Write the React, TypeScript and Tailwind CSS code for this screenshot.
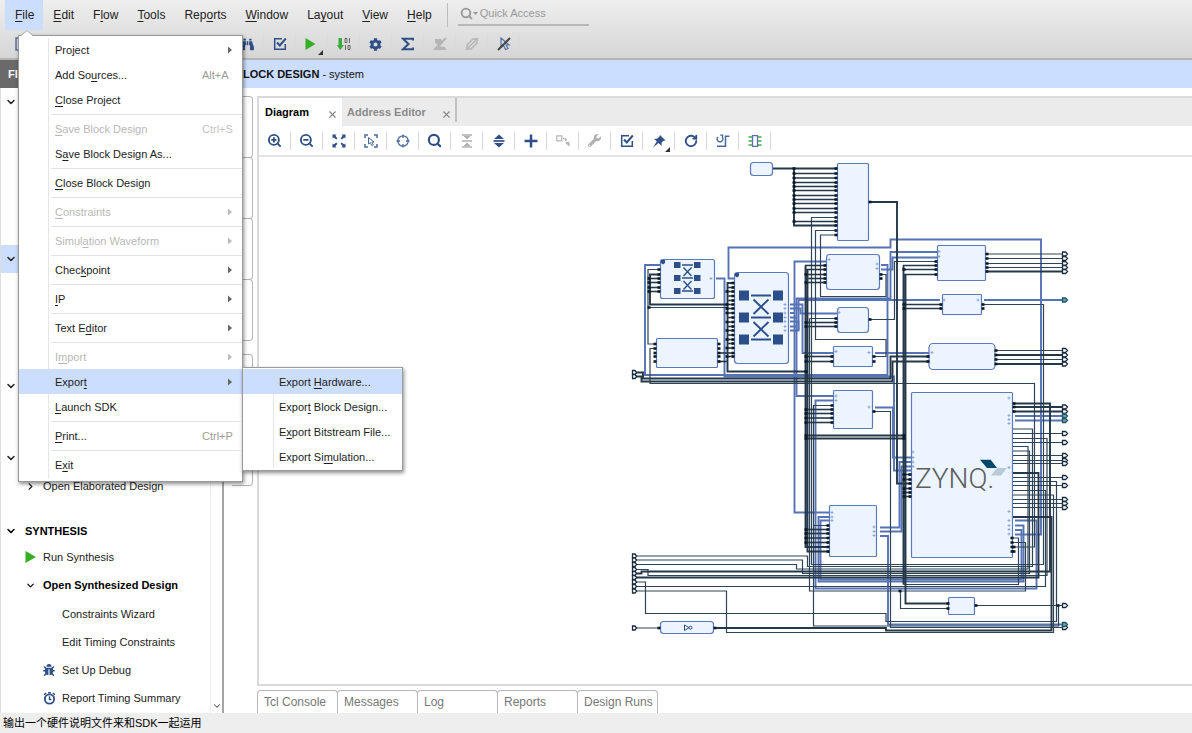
import { ReactNode } from "react";
import { ChevronDown, ChevronRight, RotateCw, Search, X, ZoomIn, ZoomOut } from "lucide-react";
import { FaBinoculars, FaBug, FaCog, FaWrench } from "react-icons/fa";

interface MenuEntry {
  label: string;
  // index of the underlined mnemonic letter
  key: number;
  shortcut?: string;
  submenu?: boolean;
  disabled?: boolean;
  separator?: boolean;
  active?: boolean;
}

const menuBar = ["File", "Edit", "Flow", "Tools", "Reports", "Window", "Layout", "View", "Help"];
const menuBarKeys = [0, 0, 1, 0, 3, 0, 2, 0, 0];

const fileMenu: MenuEntry[] = [
  { label: "Project", key: 3, submenu: true },
  { label: "Add Sources...", key: 6, shortcut: "Alt+A" },
  { label: "Close Project", key: 0, separator: true },
  { label: "Save Block Design", key: 0, shortcut: "Ctrl+S", disabled: true },
  { label: "Save Block Design As...", key: 1, separator: true },
  { label: "Close Block Design", key: 0, separator: true },
  { label: "Constraints", key: 0, submenu: true, disabled: true, separator: true },
  { label: "Simulation Waveform", key: 5, submenu: true, disabled: true, separator: true },
  { label: "Checkpoint", key: 4, submenu: true, separator: true },
  { label: "IP", key: 0, submenu: true, separator: true },
  { label: "Text Editor", key: 6, submenu: true, separator: true },
  { label: "Import", key: 1, submenu: true, disabled: true },
  { label: "Export", key: 5, submenu: true, active: true },
  { label: "Launch SDK", key: 0, separator: true },
  { label: "Print...", key: 0, shortcut: "Ctrl+P", separator: true },
  { label: "Exit", key: 1 },
];

const exportMenu: MenuEntry[] = [
  { label: "Export Hardware...", key: 7, active: true },
  { label: "Export Block Design...", key: 5 },
  { label: "Export Bitstream File...", key: 1 },
  { label: "Export Simulation...", key: 9 },
];

const Mnemonic = ({ text, at }: { text: string; at: number }) => (
  <span className="whitespace-pre">
    {text.slice(0, at)}
    <u className="underline underline-offset-2">{text[at]}</u>
    {text.slice(at + 1)}
  </span>
);

const Glyph = ({ children, size = 14 }: { children: ReactNode; size?: number }) => (
  <svg width={size} height={size} viewBox="0 0 14 14" fill="none" stroke="currentColor" strokeWidth="1.5">
    {children}
  </svg>
);

const CheckGlyph = () => (
  <Glyph>
    <path d="M9 1.7H1.7V12.3H12.3V7" />
    <path d="M4 5.5L6.8 8.5L12.8 1.5" strokeWidth="2" />
  </Glyph>
);

const CornerMark = () => (
  <svg className="absolute right-1 -bottom-0.5 text-[#333]" width="5" height="5" viewBox="0 0 5 5">
    <path d="M5 0V5H0Z" fill="currentColor" />
  </svg>
);

/* ---------- main toolbar ---------- */

const mainTools: { name: string; tone: string; icon: ReactNode; more?: boolean }[] = [
  { name: "Find", tone: "text-[#2f4f87]", icon: <FaBinoculars size={13} /> },
  { name: "Validate", tone: "text-[#2f4f87]", icon: <CheckGlyph /> },
  {
    name: "Run",
    tone: "text-[#35b024]",
    more: true,
    icon: (
      <Glyph>
        <path d="M0.5 1L10.5 7L0.5 13Z" fill="currentColor" stroke="none" />
      </Glyph>
    ),
  },
  {
    name: "Program device",
    tone: "text-[#3cab3c]",
    icon: (
      <Glyph>
        <path d="M1.5 1H5V8H7L3.3 13L-0.4 8H1.5Z" fill="currentColor" stroke="none" />
        <path d="M8 1.5H10V5.5H8ZM12.5 1V6M8.5 8V13M11 8.5H13V12.5H11Z" stroke="#666" strokeWidth="1" />
      </Glyph>
    ),
  },
  { name: "Settings", tone: "text-[#2f4f87]", icon: <FaCog size={13} /> },
  {
    name: "Statistics",
    tone: "text-[#2f4f87]",
    icon: (
      <Glyph>
        <path d="M12 3.5V1.8H2L7.5 7L2 12.2H12V10.5" strokeWidth="2" />
      </Glyph>
    ),
  },
  {
    name: "Unmark",
    tone: "text-[#b5b5b5]",
    icon: (
      <Glyph>
        <path d="M2 2H8L10 5L7 9L2 6ZM1 12L5 9L12 10L13 13H1Z" fill="currentColor" stroke="none" />
        <path d="M1 13L13 1" strokeWidth="2" />
      </Glyph>
    ),
  },
  {
    name: "Unlink",
    tone: "text-[#b5b5b5]",
    icon: (
      <Glyph>
        <path d="M2 8L8 2H12V6L6 12H2Z" />
        <path d="M1 13L13 1M5 9L9 5" />
      </Glyph>
    ),
  },
  {
    name: "Clear selection",
    tone: "text-[#5573a8]",
    icon: (
      <Glyph>
        <path d="M4 1V10L6.5 8.5L8.5 12.5L11 11.5L9 8H12Z" strokeWidth="1.2" />
        <path d="M1 13L13 1" stroke="#444" strokeWidth="2" />
      </Glyph>
    ),
  },
];

/* ---------- diagram toolbar ---------- */

const diagramTools: { name: string; tone: string; icon: ReactNode; more?: boolean }[] = [
  { name: "Zoom in", tone: "text-[#2f4f87]", icon: <ZoomIn size={15} strokeWidth={3} /> },
  { name: "Zoom out", tone: "text-[#2f4f87]", icon: <ZoomOut size={15} strokeWidth={3} /> },
  {
    name: "Zoom fit",
    tone: "text-[#2f4f87]",
    icon: (
      <Glyph>
        <path
          d="M0.5 0.5H4.5L3.4 1.8L5.4 4.2L4.2 5.4L1.8 3.4L0.5 4.5ZM13.5 0.5V4.5L12.2 3.4L9.8 5.4L8.6 4.2L10.6 1.8L9.5 0.5ZM0.5 13.5V9.5L1.8 10.6L4.2 8.6L5.4 9.8L3.4 12.2L4.5 13.5ZM13.5 13.5H9.5L10.6 12.2L8.6 9.8L9.8 8.6L12.2 10.6L13.5 9.5Z"
          fill="currentColor"
          stroke="none"
        />
      </Glyph>
    ),
  },
  {
    name: "Select area",
    tone: "text-[#4a68a0]",
    icon: (
      <Glyph>
        <path d="M1 4V1H4M10 1H13V4M13 10V13H10M4 13H1V10" />
        <path d="M4.5 3.5V10L6.3 8.6L7.8 11.5L9.3 10.8L7.9 8H10Z" strokeWidth="1" />
      </Glyph>
    ),
  },
  {
    name: "Center",
    tone: "text-[#4a68a0]",
    icon: (
      <Glyph>
        <circle cx="7" cy="7" r="5.2" strokeWidth="1.3" />
        <path d="M7 0.5V4M7 10V13.5M0.5 7H4M10 7H13.5" strokeWidth="1.3" />
      </Glyph>
    ),
  },
  { name: "Search", tone: "text-[#2f4f87]", icon: <Search size={15} strokeWidth={3.5} /> },
  {
    name: "Collapse",
    tone: "text-[#b0b0b0]",
    icon: (
      <Glyph>
        <path d="M2 1H12M2 7H12M2 13H12" strokeWidth="1.3" />
        <path d="M3.5 2L7 5.6L10.5 2ZM3.5 12L7 8.4L10.5 12Z" fill="currentColor" stroke="none" />
      </Glyph>
    ),
  },
  {
    name: "Expand",
    tone: "text-[#2f4f87]",
    icon: (
      <Glyph>
        <path d="M2 5L7 0.5L12 5ZM2 9L7 13.5L12 9Z" fill="currentColor" stroke="none" />
        <path d="M1.5 7H12.5" strokeWidth="1.7" />
      </Glyph>
    ),
  },
  {
    name: "Add IP",
    tone: "text-[#2f4f87]",
    icon: (
      <Glyph>
        <path d="M7 0.5V13.5M0.5 7H13.5" strokeWidth="2.5" />
      </Glyph>
    ),
  },
  {
    name: "Connect",
    tone: "text-[#b5b5b5]",
    icon: (
      <Glyph>
        <path d="M0.8 1.8H5.8V6.8H0.8Z" strokeWidth="1.2" />
        <path d="M7 4.5H8.5M10 8L13 11" strokeWidth="1.6" />
        <path d="M8.5 3.5L11.5 5.5L9 7.5ZM13.5 7.5V12.5L9.5 9Z" fill="currentColor" stroke="none" />
      </Glyph>
    ),
  },
  { name: "Customize", tone: "text-[#b0b0b0]", icon: <FaWrench size={13} /> },
  { name: "Validate design", tone: "text-[#2f4f87]", icon: <CheckGlyph /> },
  {
    name: "Pin",
    tone: "text-[#2f4f87]",
    more: true,
    icon: (
      <Glyph>
        <path d="M8 1L13.5 6.5L11 7L9.5 9L9.8 12L6.5 9L1 13.5L4.8 7.5L2 4.8H5L7.2 3Z" fill="currentColor" stroke="none" />
      </Glyph>
    ),
  },
  { name: "Regenerate layout", tone: "text-[#2f4f87]", icon: <RotateCw size={14} strokeWidth={3.2} /> },
  {
    name: "Optimize routing",
    tone: "text-[#4a68a0]",
    icon: (
      <Glyph>
        <path d="M2 3A2.8 2.8 0 1 0 6 3M4.2 1.2H6.6V4" strokeWidth="1.3" />
        <path d="M1 12.2H9.5V2.2H13.5M9.5 8.5V12" strokeWidth="1.5" />
      </Glyph>
    ),
  },
  {
    name: "Interface view",
    tone: "text-[#3fae49]",
    icon: (
      <Glyph>
        <path d="M0.5 3H4M0.5 7H4M0.5 11H4M10 3H13.5M10 7H13.5M10 11H13.5" strokeWidth="1.6" />
        <path d="M4.5 1.7H9.5V12.3H4.5Z" stroke="#5573a8" strokeWidth="1.3" fill="#fff" />
      </Glyph>
    ),
  },
];

/* ---------- block diagram ---------- */

// x, y, width, height, corner radius
const blocks = [
  [750.5, 162.5, 22, 13, 3],
  [837.5, 163.5, 31, 77, 1],
  [660.5, 259.5, 54, 39, 2],
  [734.5, 272.5, 54, 91, 3],
  [656.5, 338.5, 61, 29, 1],
  [826.5, 254.5, 53, 35, 3],
  [837.5, 307.5, 31, 25, 3],
  [833.5, 346.5, 39, 20, 1],
  [937.5, 245.5, 48, 35, 1],
  [942.5, 294.5, 39, 20, 1],
  [929, 343.5, 66, 26, 4],
  [833.5, 390.5, 39, 38, 1],
  [829.5, 505.5, 47, 51, 1],
  [911.5, 392.5, 101, 165, 1],
  [948.5, 597.5, 26, 17, 1],
  [660.5, 621.5, 53, 12, 3],
];

const busWires = [
  "M734 278.5H728.5V247.5H890.5V239.5H1041V534.5H1015",
  "M660 265H645V375H887.5V265H881",
  "M716 278.5H724.5V376.5H894V470.5H911",
  "M826 261.5H794.5V512.5H829",
  "M790 304.5H802.5V353H833",
  "M790 308.5H800.5V313.5H837",
  "M790 313H794.5M790 317.5H796.5M790 321.5H798.5V330.5H790M790 326.5H796.5",
  "M798.5 330V300H940",
  "M833 396H796.5V298.5H890.5V252H937",
  "M937 257.5H892.5V269.5H881",
  "M984 300H1063M875 353H929",
  "M833 400.5H815.5V588.5H1036.5V520.5H1015",
  "M829 517H818.5V581.5H1023.5V525.5H1015",
  "M829 520.5H820.5V579.5H1021.5V530H1015",
  "M875 407.5H893V457.5H911",
  "M880 527.5H899.5V462H911",
  "M880 531.5H901.5V466.5H911",
  "M880 536H888V624.5H1063",
  "M1015 416H1063M1015 420.5H1063",
];

const thinWires = [
  "M837 217.5H811.5V564.5H1043.5V304.5H982",
  "M837 230.5H815.5V339.5H886V356.5H873",
  "M837 235H820.5V296.5H886V274.5H880",
  "M869 319.5H894.5V261.5H937",
  "M809.5 318.5V591H1025.5V542.5H1013",
  "M833 405.5H813.5V626H1058.5V605.5",
  "M829 525.5H813.5M837 318.5H809.5",
  "M656 348.5H650V383.5H1034.5V547H1014",
  "M660 269.5H648V344H656M648 307.5H728",
  "M636 556H807.5V566.5H1032.5V429H1013",
  "M636 560H802.5V573.5H1029.5V451H1013",
  "M636 564.5H796.5V569H1028V446.5H1013",
  "M636 569.5H648V575.5H1047V438.5H1013",
  "M636 582H645.5V613.5H886V621.5H1056.5V481.5H1013",
  "M636 586.5H1045.5V490.5H1013",
  "M636 591H726.5V632.5H1053.5V495H1013",
  "M636 628H660M715 628H886",
  "M873 411.5H890.5V627.5H1063",
  "M900.5 591V608.5H949M975 605.5H1063",
  "M903.5 584.5H1018.5V538H1013",
  "M986 254H1063M986 258.5H1063M986 263.5H1063M986 267.5H1063",
  "M996 350.5H1063M996 359.5H1063",
  "M1013 433.5H1063M1013 442.5H1063M1013 455.5H1063M1013 460.5H1063M1013 463.5H1063M1013 477.5H1063",
  "M1013 485.5H1063M1013 499.5H1063M1013 503.5H1063M1013 507.5H1063",
];

const thickWires = [
  "M773 168.5H837M794 168.5V225.5H837",
  "M869 202H897V483.5H911",
  "M660 274.5H650V304.5H728",
  "M734 283H727.5V371.5H807",
  "M805.5 265.5V547H829M807.5 269.5V551.5H829",
  "M903.5 265.5V584.5M905.5 274.5V603.5H949",
  "M636 372.5H643V378.5H890.5V356.5H929",
  "M636 376.5H641.5V381.5H892.5V361.5H929",
  "M636 573.5H641.5V571.5H1050V403.5H1013",
  "M636 577.5H1038.5V473H1013",
  "M715 628H886V630.5H1051.5V517H1013",
  "M805.5 435.5H903.5M807.5 438.5H905.5",
  "M986 271.5H1063M996 355H1063M996 364H1063M1013 407H1063M1013 411.5H1063",
];

// groups of parallel stubs: from x, to x, list of y
const stubs: [number, number, number[]][] = [
  [794, 837, [173.5, 178, 182.5, 186.5, 190.5, 195.5, 199.5, 203.5, 208.5, 212.5, 221.5]],
  [805, 826, [265.5, 269.5, 274.5, 278.5, 282.5]],
  [807, 837, [322.5, 326.5]],
  [805, 833, [356.5, 361.5, 409.5, 413.5, 418, 422.5]],
  [805, 829, [529.5, 533.5, 538, 542.5]],
  [903, 911, [474.5, 479.5, 488.5, 492.5, 496.5]],
  [903, 937, [265.5, 269.5, 274.5]],
  [903, 942, [304.5, 308.5]],
  [649, 660, [278.5, 282.5, 287.5, 291.5]],
  [717, 728, [353, 361.5]],
  [727, 734, [287.5, 291.5, 296, 300.5, 304.5, 308.5, 313, 317.5, 322, 326.5, 330.5, 335, 339.5, 343.5, 348, 353, 356.5]],
];

// small square terminals: x, list of y
const pins: [number, number[]][] = [
  [794, [168.5, 173.5, 178, 182.5, 186.5, 190.5, 195.5, 199.5, 203.5, 208.5, 212.5, 221.5]],
  [836, [168.5, 173.5, 178, 182.5, 186.5, 190.5, 195.5, 199.5, 203.5, 208.5, 212.5, 217.5, 221.5, 225.5, 230.5, 235]],
  [825, [265.5, 269.5, 274.5, 278.5, 282.5]],
  [806, [274.5, 282.5, 322.5, 326.5, 356.5, 361.5, 371.5, 409.5, 413.5, 418, 422.5, 435.5, 438.5, 529.5, 533.5, 538, 542.5]],
  [836, [318.5, 322.5, 326.5]],
  [832, [356.5, 361.5, 405.5, 409.5, 413.5, 418, 422.5]],
  [828, [525.5, 529.5, 533.5, 538, 542.5, 547, 551.5]],
  [904, [269.5, 304.5, 308.5, 435.5, 438.5, 474.5, 479.5, 488.5, 492.5, 496.5]],
  [910, [474.5, 479.5, 483.5, 488.5, 492.5, 496.5]],
  [936, [261.5, 265.5, 269.5, 274.5]],
  [941, [304.5, 308.5]],
  [928, [356.5, 361.5]],
  [987, [254, 258.5, 263.5, 267.5, 271.5]],
  [983, [304.5, 308.5]],
  [996, [350.5, 355, 359.5, 364]],
  [870, [202, 319.5]],
  [874, [356.5, 361.5, 411.5]],
  [881, [274.5, 278.5]],
  [655, [344, 348.5, 353, 356.5, 361.5]],
  [719, [344, 348.5, 353, 356.5, 361.5]],
  [649, [278.5, 282.5, 287.5, 291.5, 307.5]],
  [659, [269.5, 274.5, 278.5, 282.5, 287.5, 291.5, 628]],
  [727, [291.5, 304.5, 308.5, 313, 322, 330.5, 339.5, 348, 356.5]],
  [733, [283, 287.5, 291.5, 296, 300.5, 304.5, 308.5, 313, 317.5, 322, 326.5, 330.5, 335, 339.5, 343.5, 348, 353, 356.5]],
  [1012, [538, 542.5, 547, 551.5]],
  [1014, [403.5, 407, 411.5, 547, 551.5]],
  [948, [603.5, 608.5]],
  [976, [605.5]],
  [1058, [605.5]],
  [900, [591]],
  [715, [628]],
];

const outPorts = [
  254, 258.5, 263.5, 267.5, 271.5, 350.5, 355, 359.5, 364, 407, 411.5, 433.5, 442.5, 455.5, 460.5, 463.5, 477.5, 485.5,
  499.5, 503.5, 507.5, 605.5, 627.5,
];
const busPorts = [300, 416, 420.5, 624.5];
const inPorts = [372.5, 376.5, 556, 560, 564.5, 569.5, 573.5, 577.5, 582, 586.5, 591, 628];

// tiny "+" marks of the interface pins
const busMarks = [
  [829, 259.5], [839, 312.5], [836, 351.5], [836, 396], [836, 400.5], [832, 512.5], [832, 517], [832, 520.5],
  [711, 278.5], [785, 304.5], [785, 308.5], [785, 313], [785, 317.5], [785, 321.5], [785, 326.5], [785, 330.5],
  [877, 264], [877, 268.5], [869, 352.5], [939, 251.5], [939, 256.5], [944, 300], [978, 300], [932, 352.5],
  [869, 407], [874, 527], [874, 531.5], [874, 535.5], [1009, 398], [1009, 415.5], [1009, 419.5], [1009, 423.5],
  [1009, 467.5], [1009, 511.5], [1009, 520.5], [1009, 525.5], [1009, 529.5], [1009, 534], [913, 452], [913, 457.5],
  [913, 462], [913, 466.5],
];

const BlockDiagram = () => (
  <svg width="440" height="476" viewBox="630 160 440 476" fill="none" role="img" aria-label="system block design">
    <g stroke="#5673b5" strokeWidth="1.9">
      {busWires.map((d) => (
        <path key={d} d={d} />
      ))}
    </g>
    <g stroke="#2f4456" strokeWidth="1.2">
      {thinWires.map((d) => (
        <path key={d} d={d} />
      ))}
    </g>
    <g stroke="#243849" strokeWidth="1.9">
      {thickWires.map((d) => (
        <path key={d} d={d} />
      ))}
    </g>
    <g stroke="#243849" strokeWidth="1.6">
      {stubs.map(([x1, x2, ys]) => ys.map((y) => <path key={`${x1}-${y}`} d={`M${x1} ${y}H${x2}`} />))}
    </g>
    <g fill="#ebf4ff" stroke="#5b7abc" strokeWidth="1.2">
      {blocks.map(([x, y, w, h, r]) => (
        <rect key={`${x}-${y}`} x={x} y={y} width={w} height={h} rx={r} />
      ))}
    </g>
    <g fill="#0c1826">
      {pins.map(([x, ys], i) => ys.map((y) => <rect key={`${i}-${y}`} x={x - 1.5} y={y - 1.3} width="3" height="2.6" />))}
    </g>
    <g stroke="#7f9bd0" strokeWidth="0.8">
      {busMarks.map(([x, y]) => (
        <path key={`${x}-${y}`} d={`M${x - 1.5} ${y}h3m-1.5 -1.5v3`} />
      ))}
    </g>
    <g stroke="#1b2e40" strokeWidth="1.3" fill="#fff">
      {outPorts.map((y) => (
        <path key={y} d={`M1062.5 ${y - 2}H1065.5L1067.5 ${y}L1065.5 ${y + 2}H1062.5Z`} />
      ))}
      {inPorts.map((y) => (
        <path key={y} d={`M632.5 ${y - 2}H635L636.5 ${y}L635 ${y + 2}H632.5Z`} />
      ))}
    </g>
    <g stroke="#1f5566" strokeWidth="1.3" fill="#6fa3ac">
      {busPorts.map((y) => (
        <path key={y} d={`M1062.5 ${y - 2}H1065.5L1067.5 ${y}L1065.5 ${y + 2}H1062.5Z`} />
      ))}
    </g>

    {/* interconnect symbols */}
    <g fill="#2c4f8c">
      {[265, 278, 291].map((y) => (
        <path key={y} d={`M674 ${y - 3}h6.5v6h-6.5zM694 ${y - 3}h6.5v6h-6.5z`} />
      ))}
      {[295.5, 317.5, 339.5].map((y) => (
        <path key={y} d={`M739 ${y - 5}h10v10h-10zM773 ${y - 5}h10v10h-10z`} />
      ))}
      <path d="M661 263V260H665V263L663 264.5ZM735 276V273H739V276L737 277.5Z" />
    </g>
    <g stroke="#2c4f8c" strokeWidth="1.4">
      <path d="M682 265H693M682 278H693M682 291H693M683.5 267.5L691.5 276M691.5 267.5L683.5 276M683.5 281L691.5 289.5M691.5 281L683.5 289.5" />
      <path
        d="M751 295.5H771M751 317.5H771M751 339.5H771M753.5 299.5L768.5 314M768.5 299.5L753.5 314M753.5 322L768.5 336.5M768.5 322L753.5 336.5"
        strokeWidth="1.9"
      />
    </g>
    <g stroke="#2c4f8c">
      <path d="M684.5 625V630.5L689 627.7Z" />
      <circle cx="690.5" cy="627.7" r="1.5" />
    </g>

    <text x="915" y="487.5" fill="#5e5e5e" className="font-['Roboto'] text-[28px] font-light">
      ZYNQ.
    </text>
    <path d="M980 459.7H990.7L997 468H987Z" fill="#00486b" />
    <path d="M997 468H1007L1001 475.5H991Z" fill="#b9c9d6" />
  </svg>
);

/* ---------- menus ---------- */

const MenuRow = ({ entry, children }: { entry: MenuEntry; children?: ReactNode }) => (
  <li className="relative">
    <button
      disabled={entry.disabled}
      className={`relative flex h-[25px] w-full items-center pr-2 pl-9 text-left ${
        entry.active ? "bg-[#ccdeff]" : ""
      } ${entry.disabled ? "text-[#b8b8b8]" : "text-[#1c1c1c]"}`}
    >
      <span className="grow">
        <Mnemonic text={entry.label} at={entry.key} />
      </span>
      {entry.shortcut && (
        <span className={`w-8 whitespace-nowrap ${entry.disabled ? "text-[#c4c4c4]" : "text-[#9c9c94]"}`}>
          {entry.shortcut}
        </span>
      )}
      {entry.submenu && (
        <svg width="7" height="8" viewBox="0 0 7 8" className={entry.disabled ? "text-[#bbb]" : "text-[#666]"}>
          <path d="M1 0.5L5 4L1 7.5Z" fill="currentColor" />
        </svg>
      )}
    </button>
    {entry.separator && <div className="mb-px ml-8 h-[3px] border-b border-[#e3e3e3]" />}
    {children}
  </li>
);

const FileMenu = () => (
  <div className="absolute top-[35px] left-[18px] z-10 w-[225px] border border-[#9a9a9a] bg-white text-[11px] shadow-[1px_2px_4px_rgba(0,0,0,0.45)]">
    <svg className="absolute -top-1.5 left-0.5" width="12" height="7" viewBox="0 0 12 7">
      <path d="M0 6L6 0.5L12 6V7H0Z" fill="#fff" />
      <path d="M0 5.5L6 0.5L12 5.5" fill="none" stroke="#aaa" />
    </svg>
    <div className="absolute inset-y-0.5 left-[29px] w-px bg-[#e6e6e6]" />
    <ul className="pt-px pb-1">
      {fileMenu.map((entry) => (
        <MenuRow key={entry.label} entry={entry}>
          {entry.active && (
            <div className="absolute -top-0.5 left-[223px] w-[161px] border border-[#9a9a9a] bg-white shadow-[1px_2px_4px_rgba(0,0,0,0.45)]">
              <div className="absolute inset-y-0.5 left-[30px] w-px bg-[#e6e6e6]" />
              <ul className="py-px">
                {exportMenu.map((item) => (
                  <MenuRow key={item.label} entry={item} />
                ))}
              </ul>
            </div>
          )}
        </MenuRow>
      ))}
    </ul>
  </div>
);

const Header = () => (
  <header className="relative h-[60px] border-b-2 border-[#b4b4b4] bg-linear-to-b from-[#eeeeee] to-[#d6d6d6]">
    <div className="flex h-[30px] items-center pl-[5px]">
      <nav className="flex h-full">
        {menuBar.map((item, i) => (
          <button key={item} className={`h-full pr-[9px] pl-2.5 text-[#222] ${i === 0 ? "bg-[#ccdeff]" : ""}`}>
            <Mnemonic text={item} at={menuBarKeys[i]} />
          </button>
        ))}
      </nav>
      <div className="ml-1.5 h-6 w-px bg-[#bcbcbc]" />
      <label className="mt-0.5 ml-2.5 flex h-6 w-[131px] items-center self-start border-b-2 border-[#b8b8b8] pl-0.5 text-[11px] text-[#999]">
        <Search size={13} strokeWidth={3.5} />
        <svg width="5" height="3" viewBox="0 0 5 3">
          <path d="M0 0H5L2.5 3Z" fill="currentColor" />
        </svg>
        <input
          aria-label="Quick Access"
          placeholder="Quick Access"
          className="ml-0.5 w-24 bg-transparent outline-none placeholder:text-[#999]"
        />
      </label>
    </div>
    <div className="flex h-7 items-center pl-1.5">
      <button aria-label="Open" className="flex w-[226px] pl-2 text-[#5573a8]">
        <Glyph>
          <path d="M2 1H12V13H2Z" />
        </Glyph>
      </button>
      {mainTools.map((tool) => (
        <button
          key={tool.name}
          aria-label={tool.name}
          className={`relative flex h-[18px] w-8 items-center justify-center border-r border-[#dadada] ${tool.tone}`}
        >
          {tool.icon}
          {tool.more && <CornerMark />}
        </button>
      ))}
    </div>
    <FileMenu />
  </header>
);

/* ---------- flow navigator ---------- */

const Section = ({ name, active }: { name: string; active?: boolean }) => (
  <button aria-label={name} className={`flex h-7 w-full items-center pl-1 ${active ? "bg-[#ccdeff]" : ""}`}>
    <ChevronDown size={12} strokeWidth={3} />
  </button>
);

const synthesisTasks = [
  { name: "Constraints Wizard" },
  { name: "Edit Timing Constraints" },
  { name: "Set Up Debug", icon: <FaBug size={12} /> },
  {
    name: "Report Timing Summary",
    icon: (
      <Glyph size={13}>
        <circle cx="7" cy="7.5" r="5" strokeWidth="2" />
        <path d="M7 4.5V8H9M1 3L3.5 1M13 3L10.5 1M5.5 0.8H8.5" />
      </Glyph>
    ),
  },
];

const FlowNavigator = () => (
  <aside className="flex w-[224px] shrink-0 flex-col border-r-2 border-[#a5a5a5] text-[11px]">
    <h2 className="flex h-7 items-center bg-[#6a6a6a] pl-2 font-bold text-white">Flow</h2>
    <div className="flex grow">
      <div className="w-[210px] border-l border-[#ddd] text-[#222]">
        <div className="h-[157px]">
          <Section name="Project Manager" />
        </div>
        <div className="h-[127px]">
          <Section name="IP Integrator" active />
        </div>
        <div className="h-[72px]">
          <Section name="Simulation" />
        </div>
        <Section name="RTL Analysis" />
        <button className="flex h-7 w-full items-center pl-6">
          <ChevronRight size={11} strokeWidth={2.5} />
          <span className="ml-[7px]">Open Elaborated Design</span>
        </button>
        <button className="mt-[18px] flex h-[26px] w-full items-center pl-1 font-bold text-black">
          <ChevronDown size={12} strokeWidth={3} />
          <span className="ml-2">SYNTHESIS</span>
        </button>
        <button className="flex h-[26px] w-full items-center pl-6">
          <svg width="11" height="12" viewBox="0 0 11 12">
            <path d="M0.5 0L11 6L0.5 12Z" fill="#35b024" />
          </svg>
          <span className="ml-[7px]">Run Synthesis</span>
        </button>
        <button className="flex h-[30px] w-full items-center pl-6 font-bold text-black">
          <ChevronDown size={11} strokeWidth={2.5} />
          <span className="ml-[7px]">Open Synthesized Design</span>
        </button>
        {synthesisTasks.map((task) => (
          <button key={task.name} className="flex h-7 w-full items-center pl-[42px]">
            <span className="w-[19px] text-[#2f4f87]">{task.icon}</span>
            <span className="whitespace-nowrap">{task.name}</span>
          </button>
        ))}
      </div>
      <div className="flex grow items-end justify-center border-l border-[#eee] pb-0.5 text-[#555]">
        <ChevronDown size={10} strokeWidth={2.5} />
      </div>
    </div>
  </aside>
);

const sideTabs = ["h-[62px]", "h-[62px]", "h-[62px]", "h-[62px]", "mt-[14px] h-[132px]"];

const outputTabs = ["Tcl Console", "Messages", "Log", "Reports", "Design Runs"];

const Workspace = () => (
  <main className="flex min-w-0 grow flex-col">
    <h1 className="flex h-7 items-center bg-[#ccdeff] pl-[11px] text-[11px] whitespace-pre text-[#111]">
      <b>BLOCK DESIGN</b> - system
    </h1>
    <div className="flex grow pt-2">
      <div className="w-[33px] shrink-0 pr-1 pl-2">
        {sideTabs.map((size, i) => (
          <div key={i} className={`-mb-px rounded-r-sm border border-l-0 border-[#b5b5b5] ${size}`} />
        ))}
      </div>
      <div className="flex min-w-0 grow flex-col">
        <section className="flex grow flex-col border-2 border-r-0 border-[#dadada]">
          <div className="flex h-7 bg-[#ebebeb] text-[11px]">
            <div className="flex w-[83px] items-center justify-between bg-white pr-1 pl-1.5">
              <button className="font-bold text-black">Diagram</button>
              <button aria-label="Close Diagram" className="pt-1 text-[#888]">
                <X size={11} strokeWidth={2.5} />
              </button>
            </div>
            <div className="flex w-[115px] items-center justify-between pl-[5px] text-[#8a8a8a]">
              <button className="font-bold whitespace-nowrap">Address Editor</button>
              <div className="flex h-6 items-center self-start border-r-2 border-[#c0c0c0] pr-[3px]">
                <button aria-label="Close Address Editor" className="pt-2">
                  <X size={11} strokeWidth={2.5} />
                </button>
              </div>
            </div>
          </div>
          <div className="flex h-[31px] items-center border-b-2 border-[#e4e4e4]">
            {diagramTools.map((tool) => (
              <button
                key={tool.name}
                aria-label={tool.name}
                className={`relative flex h-[18px] w-8 items-center justify-center border-r border-[#d8d8d8] ${tool.tone}`}
              >
                {tool.icon}
                {tool.more && <CornerMark />}
              </button>
            ))}
          </div>
          <div className="flex grow justify-end pt-[3px] pr-[122px]">
            <BlockDiagram />
          </div>
        </section>
        <div className="mt-1 flex h-[23px]">
          {outputTabs.map((tab) => (
            <button
              key={tab}
              className="-mr-px w-[81px] rounded-t-sm border border-b-0 border-[#b5b5b5] pl-1.5 text-left whitespace-nowrap text-[#777]"
            >
              {tab}
            </button>
          ))}
        </div>
      </div>
    </div>
  </main>
);

const App = () => {
  return (
    <div className="flex min-h-screen flex-col bg-white font-['Liberation_Sans',Arial,'Noto_Sans_CJK_SC',sans-serif] text-[12px] leading-4">
      <Header />
      <div className="flex grow">
        <FlowNavigator />
        <Workspace />
      </div>
      <footer className="flex h-5 items-center bg-[#eeeeee] pl-[3px] text-[11px] text-black">
        <p>输出一个硬件说明文件来和SDK一起运用</p>
      </footer>
    </div>
  );
};

export default App;
